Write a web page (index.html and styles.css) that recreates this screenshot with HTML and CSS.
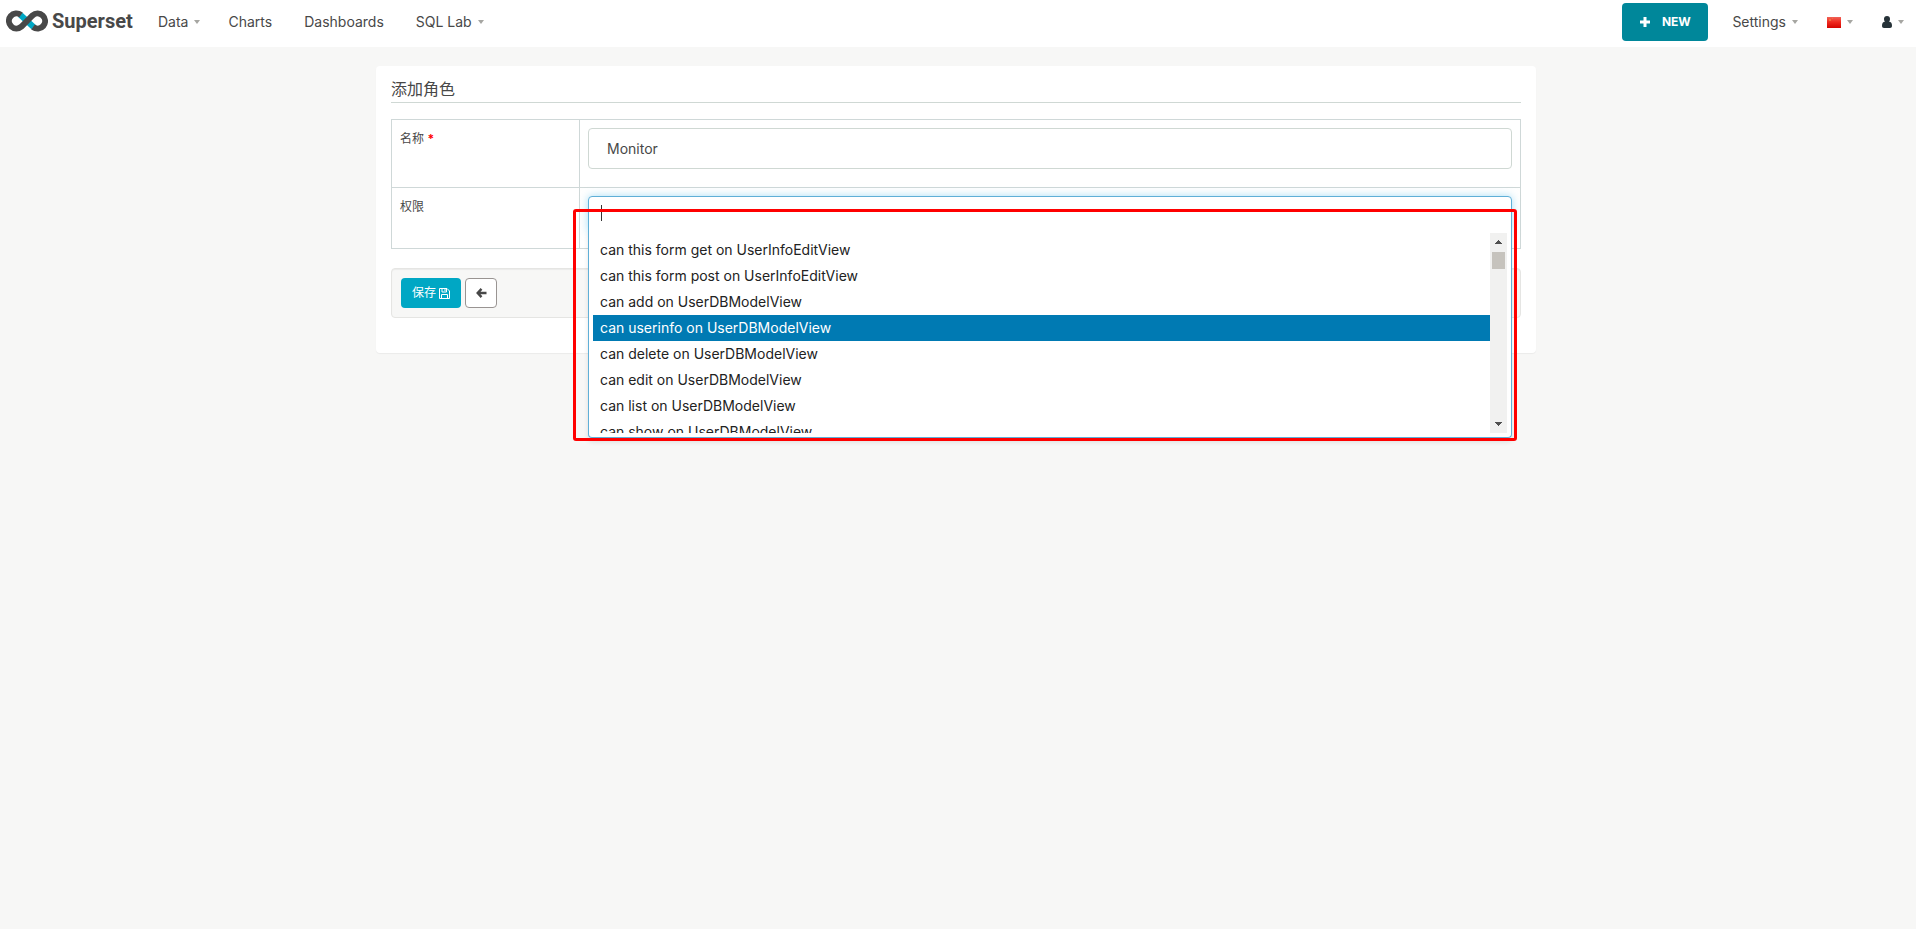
FILE: index.html
```html
<!DOCTYPE html>
<html lang="zh-CN">
<head>
<meta charset="utf-8">
<title>Superset</title>
<link rel="stylesheet" href="styles.css">
</head>
<body>
<header class="navbar">
  <a class="brand" href="#">
    <svg class="brand-mark" viewBox="0 0 42 22" aria-hidden="true">
      <g fill="none" stroke-width="6">
        <path stroke="#00a7c4" d="M14.500 5L27.500 17"/>
        <path stroke="#484848" d="M15 5A7.500 7.500 0 1 0 15.500 16.500L26.500 5.500A7.500 7.500 0 1 1 27 17"/>
      </g>
    </svg>
    <span class="brand-name">Superset</span>
  </a>
  <nav class="menu">
    <a href="#">Data<i class="caret"></i></a>
    <a href="#">Charts</a>
    <a href="#">Dashboards</a>
    <a href="#">SQL Lab<i class="caret"></i></a>
  </nav>
  <div class="tools">
    <button class="new" type="button">
      <svg viewBox="0 0 10 10" width="10" height="10" aria-hidden="true"><path d="M5 0v10M0 5h10" stroke="#fff" stroke-width="3"/></svg>
      NEW
    </button>
    <a class="settings" href="#">Settings<i class="caret"></i></a>
    <a class="flag-link" href="#" aria-label="中文">
      <svg viewBox="0 0 14 11" width="14" height="11" aria-hidden="true">
        <defs><linearGradient id="flag" x2="0" y2="1"><stop stop-color="#ef6358"/><stop offset=".45" stop-color="#f02b20"/><stop offset="1" stop-color="#d50500"/></linearGradient></defs>
        <path fill="url(#flag)" d="M0 0h14v11H0z"/><path fill="#f4703a" d="M2 2h2v2H2zM5 1h1v1H5z"/>
      </svg><i class="caret"></i>
    </a>
    <a class="user-link" href="#" aria-label="User">
      <svg viewBox="0 0 10 12" width="10" height="12" aria-hidden="true"><path fill="#263238" d="M5 0a3 3 0 0 1 3 3a3 3 0 0 1-1 2.600C9 5.800 10 7.500 10 9.800C10 11.300 9.200 12 8 12H2C.8 12 0 11.300 0 9.800C0 7.500 1 5.800 3 5.600A3 3 0 0 1 2 3A3 3 0 0 1 5 0z"/></svg><i class="caret"></i>
    </a>
  </div>
</header>
<main class="card">
  <h1>添加角色</h1>
  <form>
    <table class="fields">
      <tr>
        <th scope="row"><label for="name">名称 <strong>*</strong></label></th>
        <td><input class="text" id="name" type="text" value="Monitor"></td>
      </tr>
      <tr>
        <th scope="row"><label for="perms">权限</label></th>
        <td>
          <div class="picker">
            <input class="search" id="perms" type="text" role="combobox" aria-expanded="true" aria-controls="options">
            <span class="cursor"></span>
            <div class="dropdown">
              <ul id="options" role="listbox">
                <li role="option">can this form get on UserInfoEditView</li>
                <li role="option">can this form post on UserInfoEditView</li>
                <li role="option">can add on UserDBModelView</li>
                <li role="option" class="active" aria-selected="true">can userinfo on UserDBModelView</li>
                <li role="option">can delete on UserDBModelView</li>
                <li role="option">can edit on UserDBModelView</li>
                <li role="option">can list on UserDBModelView</li>
                <li role="option">can show on UserDBModelView</li>
              </ul>
              <div class="scrollbar">
                <svg viewBox="0 0 7 4" width="7" height="4" aria-hidden="true"><path fill="#505050" d="M3 0h1v1h1v1h1v1h1v1H0V3h1V2h1V1h1z"/></svg>
                <span class="thumb"></span>
                <svg viewBox="0 0 7 4" width="7" height="4" aria-hidden="true"><path fill="#505050" d="M3 4h1V3h1V2h1V1h1V0H0v1h1v1h1v1h1z"/></svg>
              </div>
            </div>
            <div class="marker"></div>
          </div>
        </td>
      </tr>
    </table>
    <div class="actions">
      <button class="save" type="submit">保存
        <svg viewBox="0 0 11 11" width="11" height="11" aria-hidden="true"><path fill="none" stroke="#fff" d="M.5.500H8L10.500 3v7.500H.5zM3 .5V4h4.500V.5M2.500 10.500v-4h6v4M6 1v2"/></svg>
      </button>
      <button class="back" type="button" aria-label="返回">
        <svg viewBox="0 0 11 10" width="11" height="10" aria-hidden="true"><path fill="none" stroke="#484848" stroke-width="2.400" d="M5.500.900L1.700 5L5.500 9.100M1.700 5H10.500"/></svg>
      </button>
    </div>
  </form>
</main>
</body>
</html>
```
FILE: styles.css
```css
* { box-sizing: border-box; }
body {
  margin: 0;
  min-height: 100vh;
  background: #f7f7f6;
  color: #484848;
  font: 14px/20px Inter, "Noto Sans CJK SC", sans-serif;
}
input, button { font: inherit; color: inherit; }
a { color: #484848; text-decoration: none; }
.navbar {
  display: flex;
  align-items: center;
  height: 47px;
  padding: 0 12px 3px 6px;
  background: #fff;
}
.brand { display: flex; align-items: center; gap: 4px; width: 152px; }
.brand-mark { width: 42px; height: 22px; margin-bottom: 2px; }
.brand-name { font: 700 20px/22px Roboto, sans-serif; margin-bottom: 2px; }
.menu { display: flex; gap: 32px; }
.menu a:first-child { margin-right: -4px; }
.caret {
  display: inline-block;
  margin-left: 6px;
  vertical-align: 3px;
  border: 3px solid transparent;
  border-top: 4px solid #a6a6a2;
  border-bottom: 0;
}
.tools { display: flex; align-items: center; margin-left: auto; gap: 29px; }
.tools a { display: flex; align-items: center; }
.new {
  display: flex;
  align-items: center;
  justify-content: center;
  gap: 12px;
  width: 86px;
  height: 38px;
  margin-right: -5px;
  padding: 0;
  border: 0;
  border-radius: 4px;
  background: #00879a;
  color: #fff;
  font-size: 12px;
  font-weight: 700;
}
.card {
  width: 1160px;
  max-width: 100%;
  margin: 19px auto 0;
  padding: 12px 15px 35px;
  margin-left: max(0px, calc(50% - 582px));
  border-radius: 4px;
  background: #fff;
  box-shadow: 0 1px 1px rgba(0, 0, 0, .05);
}
h1 {
  margin: 0 0 16px;
  padding-bottom: 2px;
  border-bottom: 1px solid #cfd8d4;
  font-size: 16px;
  line-height: 22px;
  font-weight: 400;
}
.fields { width: 100%; border-collapse: collapse; table-layout: fixed; }
.fields th, .fields td { padding: 8px; border: 1px solid #cfd8d8; vertical-align: top; }
.fields th { width: 188px; text-align: left; font-size: 12px; font-weight: 400; line-height: 22px; }
.fields strong { color: #f00; }
.text {
  display: block;
  width: 100%;
  height: 41px;
  margin-bottom: 10px;
  padding: 0 18px;
  border: 1px solid #cfd8d3;
  border-radius: 4px;
  background: #fff;
}
.picker { position: relative; height: 44px; }
.search {
  display: block;
  width: 100%;
  height: 36px;
  padding: 0 12px;
  border: 1px solid #5fafd7;
  border-radius: 4px 4px 0 0;
  outline: 0;
  background: #fff;
  box-shadow: 0 0 8px rgba(82, 190, 236, .5);
}
.cursor { position: absolute; z-index: 2; left: 13px; top: 9px; width: 1px; height: 16px; background: #333; }
.dropdown {
  position: absolute;
  z-index: 1;
  top: 33px;
  left: 0;
  right: 0;
  display: flex;
  height: 209px;
  padding: 4px;
  border: 1px solid #5fafd7;
  border-top: 0;
  border-radius: 0 0 4px 4px;
  background: #fff;
  box-shadow: 0 4px 5px rgba(0, 0, 0, .1);
}
.dropdown ul { flex: 1; margin: 0; padding: 4px 0 0; overflow: hidden; list-style: none; }
.dropdown li { height: 26px; padding: 3px 7px; color: #222; }
.dropdown .active { background: #007ab3; color: #fff; }
.scrollbar {
  display: flex;
  flex-direction: column;
  align-items: center;
  width: 17px;
  height: 200px;
  padding: 7px 0;
  background: #f1f1f0;
}
.thumb { width: 13px; height: 17px; margin: 8px 0 auto; background: #c6c3bd; }
.marker {
  position: absolute;
  z-index: 3;
  top: 13px;
  right: -5px;
  left: -15px;
  height: 232px;
  border: 3px solid #f00;
  border-radius: 3px;
  pointer-events: none;
}
.actions {
  display: flex;
  gap: 4px;
  margin-top: 19px;
  padding: 9px;
  border: 1px solid #e5e5e3;
  border-radius: 4px;
  background: #f7f7f6;
  box-shadow: inset 0 1px 1px rgba(0, 0, 0, .05);
}
.actions button {
  display: flex;
  align-items: center;
  justify-content: center;
  gap: 3px;
  height: 30px;
  padding: 0;
  border-radius: 4px;
  font-size: 12px;
}
.actions .save { width: 60px; border: 0; background: #00a7c4; color: #fff; }
.actions .back { width: 32px; border: 1px solid #999492; background: #fff; }
```
